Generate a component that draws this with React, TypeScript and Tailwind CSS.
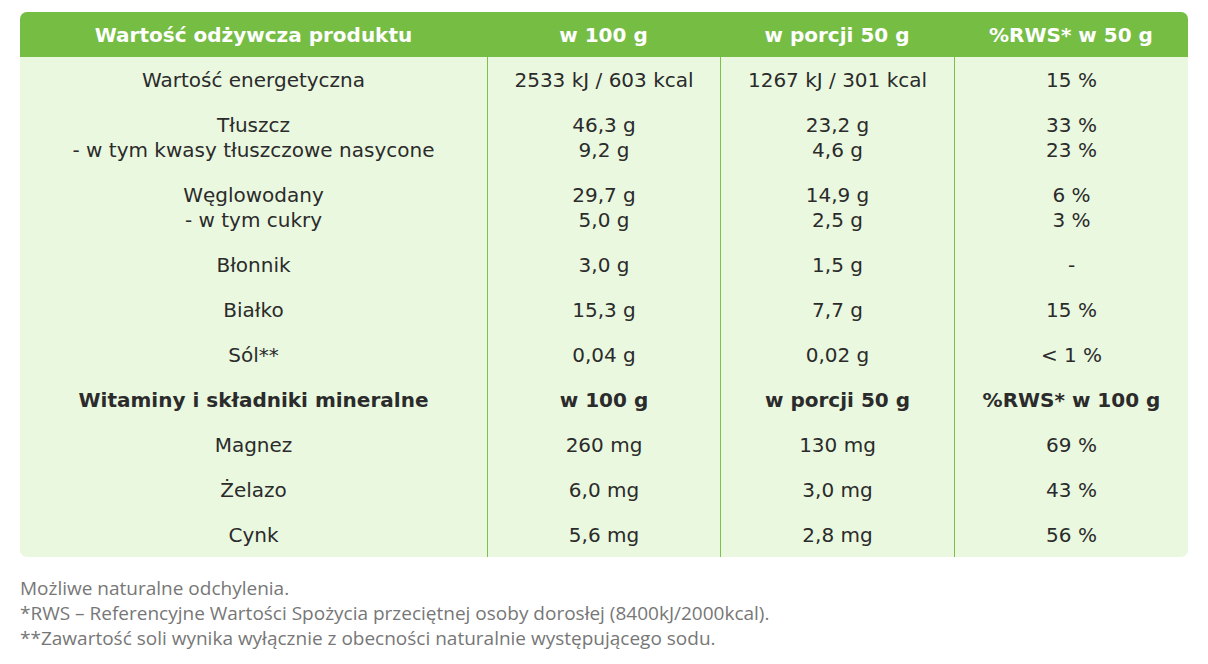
import React from "react";

type Row = { cells: string[][]; bold?: boolean };

const rows: Row[] = [
  { cells: [["Wartość energetyczna"], ["2533 kJ / 603 kcal"], ["1267 kJ / 301 kcal"], ["15 %"]] },
  {
    cells: [
      ["Tłuszcz", "- w tym kwasy tłuszczowe nasycone"],
      ["46,3 g", "9,2 g"],
      ["23,2 g", "4,6 g"],
      ["33 %", "23 %"],
    ],
  },
  {
    cells: [
      ["Węglowodany", "- w tym cukry"],
      ["29,7 g", "5,0 g"],
      ["14,9 g", "2,5 g"],
      ["6 %", "3 %"],
    ],
  },
  { cells: [["Błonnik"], ["3,0 g"], ["1,5 g"], ["-"]] },
  { cells: [["Białko"], ["15,3 g"], ["7,7 g"], ["15 %"]] },
  { cells: [["Sól**"], ["0,04 g"], ["0,02 g"], ["< 1 %"]] },
  {
    bold: true,
    cells: [["Witaminy i składniki mineralne"], ["w 100 g"], ["w porcji 50 g"], ["%RWS* w 100 g"]],
  },
  { cells: [["Magnez"], ["260 mg"], ["130 mg"], ["69 %"]] },
  { cells: [["Żelazo"], ["6,0 mg"], ["3,0 mg"], ["43 %"]] },
  { cells: [["Cynk"], ["5,6 mg"], ["2,8 mg"], ["56 %"]] },
];

const headers = ["Wartość odżywcza produktu", "w 100 g", "w porcji 50 g", "%RWS* w 50 g"];

export default function App() {
  return (
    <div className="w-[1208px] h-[664px] bg-white pt-3 px-5 overflow-hidden">
      <div
        className="w-[1168px] rounded-[7px] overflow-hidden bg-[#eaf8e0] text-[#2b2b2b] text-[20px]"
        style={{ fontFamily: '"DejaVu Sans", Verdana, sans-serif' }}
      >
        <div className="grid grid-cols-[467px_233px_234px_234px] bg-[#76bd43] h-[45px] pt-px items-center text-white font-bold text-[20px]">
          {headers.map((h, i) => (
            <div key={i} className="text-center leading-[25px]">
              {h}
            </div>
          ))}
        </div>
        <div className="grid grid-cols-[467px_233px_234px_234px]">
          {[0, 1, 2, 3].map((col) => (
            <div
              key={col}
              className={
                "flex flex-col " + (col > 0 ? "border-l border-[#7cbf4a]" : "")
              }
            >
              {rows.map((r, ri) => (
                <div
                  key={ri}
                  className={
                    "pt-[11px] pb-[9px] text-center leading-[25px] " +
                    (r.bold ? "font-bold" : "")
                  }
                >
                  {r.cells[col].map((line, li) => (
                    <div key={li}>{line}</div>
                  ))}
                </div>
              ))}
            </div>
          ))}
        </div>
      </div>
      <div
        className="mt-[19px] text-[19px] leading-[25px] text-[#777777]"
        style={{ fontFamily: '"Open Sans", sans-serif' }}
      >
        <div>Możliwe naturalne odchylenia.</div>
        <div>*RWS – Referencyjne Wartości Spożycia przeciętnej osoby dorosłej (8400kJ/2000kcal).</div>
        <div>**Zawartość soli wynika wyłącznie z obecności naturalnie występującego sodu.</div>
      </div>
    </div>
  );
}
